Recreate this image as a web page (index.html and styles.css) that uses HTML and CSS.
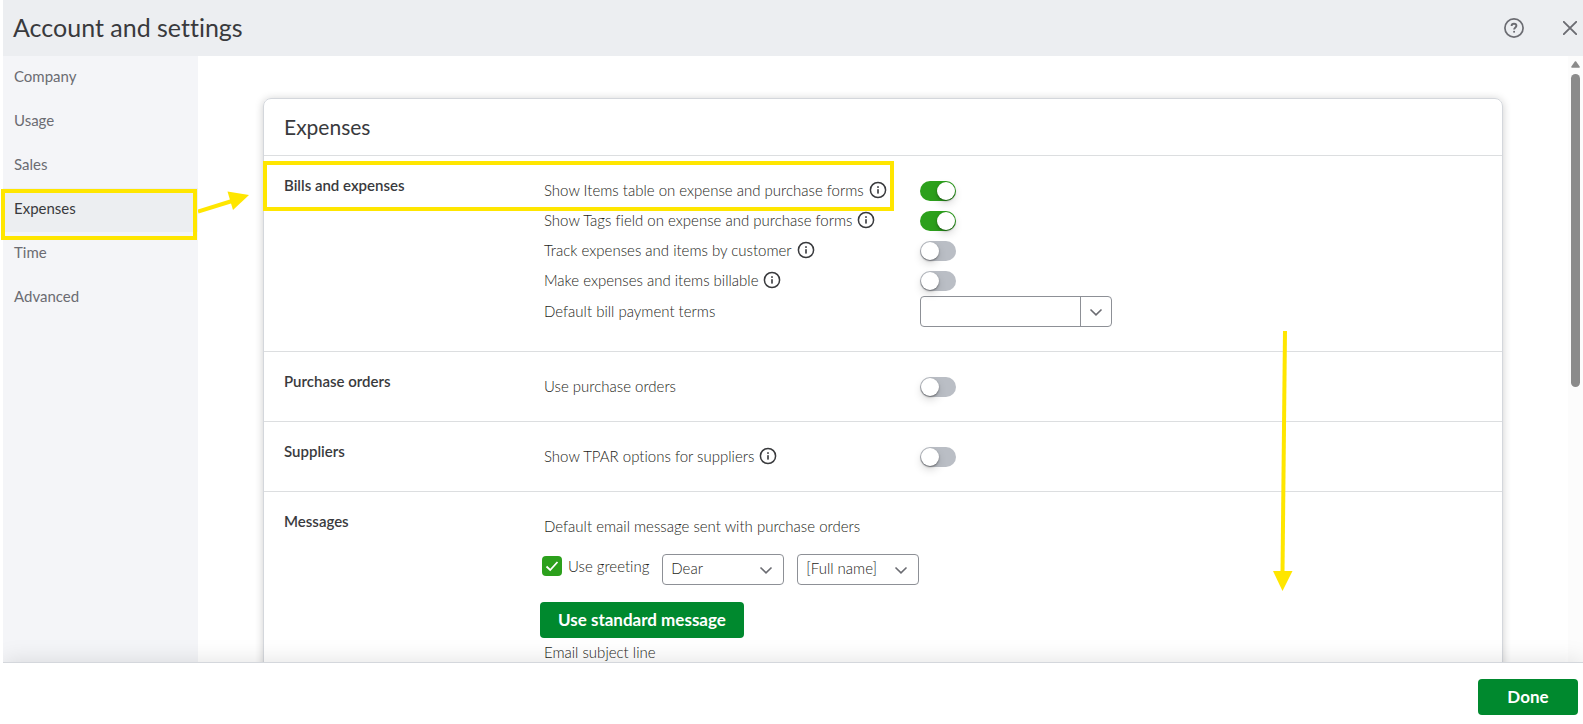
FILE: index.html
```html
<!DOCTYPE html>
<html lang="en">
    <head>
        <meta charset="utf-8">
        <title>Account and settings</title>
        <link rel="stylesheet" href="styles.css">
    </head>
    <body>
        <svg class="sprite" aria-hidden="true">
            <symbol id="icon-info" viewBox="0 0 18 18">
                <circle cx="9" cy="9" r="7.6" fill="none" stroke="currentColor" stroke-width="1.5"/>
                <rect x="8.2" y="5.2" width="1.6" height="1.7" fill="currentColor"/>
                <rect x="8.2" y="8.2" width="1.6" height="4.4" fill="currentColor"/>
            </symbol>
            <symbol id="icon-chevron" viewBox="0 0 14 14">
                <path d="M1.5 4.5 L7 9.8 L12.5 4.5" fill="none" stroke="currentColor" stroke-width="1.6"/>
            </symbol>
        </svg>

        <header class="header">
            <h1 class="title">Account and settings</h1>
            <button class="icon-button" type="button" aria-label="Help">
                <svg width="20" height="20" viewBox="0 0 20 20" fill="none" stroke="currentColor">
                    <circle cx="10" cy="10" r="9.1" stroke-width="1.7"/>
                    <path d="M7.6 7.9 C7.6 6.5 8.6 5.7 10 5.7 C11.4 5.7 12.4 6.6 12.4 7.8 C12.4 9.4 10.1 9.5 10.1 11.6" stroke-width="1.9"/>
                    <rect x="9.2" y="12.9" width="1.8" height="1.7" fill="currentColor" stroke="none"/>
                </svg>
            </button>
            <button class="icon-button" type="button" aria-label="Close">
                <svg width="14" height="14" viewBox="0 0 14 14" fill="none" stroke="currentColor" stroke-width="1.9" stroke-linecap="round">
                    <path d="M0.8 0.8 L13.2 13.2 M13.2 0.8 L0.8 13.2"/>
                </svg>
            </button>
        </header>

        <div class="body">
            <nav class="sidebar">
                <a class="nav-item" href="#">Company</a>
                <a class="nav-item" href="#">Usage</a>
                <a class="nav-item" href="#">Sales</a>
                <a class="nav-item active" href="#">
                    Expenses
                    <span class="highlight highlight-nav"></span>
                    <svg class="arrow-nav" width="54" height="24" viewBox="0 0 54 24" fill="#ffe600">
                        <path d="M0 20.5 L34 10" stroke="#ffe600" stroke-width="4"/>
                        <path d="M51 4 L29.5 0.5 L35 19 Z"/>
                    </svg>
                </a>
                <a class="nav-item" href="#">Time</a>
                <a class="nav-item" href="#">Advanced</a>
            </nav>

            <main class="content">
                <div class="card">
                    <h2 class="card-title">Expenses</h2>

                    <section class="section section-bills">
                        <span class="highlight highlight-bills"></span>
                        <h3 class="section-title">Bills and expenses</h3>
                        <div class="settings">
                            <div class="setting">
                                <div class="setting-name">
                                    <label for="items-table">Show Items table on expense and purchase forms</label>
                                    <button class="info" type="button" aria-label="More info"><svg width="18" height="18"><use href="#icon-info"/></svg></button>
                                </div>
                                <input id="items-table" class="toggle" type="checkbox" checked>
                            </div>
                            <div class="setting">
                                <div class="setting-name">
                                    <label for="tags-field">Show Tags field on expense and purchase forms</label>
                                    <button class="info" type="button" aria-label="More info"><svg width="18" height="18"><use href="#icon-info"/></svg></button>
                                </div>
                                <input id="tags-field" class="toggle" type="checkbox" checked>
                            </div>
                            <div class="setting">
                                <div class="setting-name">
                                    <label for="track-customer">Track expenses and items by customer</label>
                                    <button class="info" type="button" aria-label="More info"><svg width="18" height="18"><use href="#icon-info"/></svg></button>
                                </div>
                                <input id="track-customer" class="toggle" type="checkbox">
                            </div>
                            <div class="setting">
                                <div class="setting-name">
                                    <label for="billable">Make expenses and items billable</label>
                                    <button class="info" type="button" aria-label="More info"><svg width="18" height="18"><use href="#icon-info"/></svg></button>
                                </div>
                                <input id="billable" class="toggle" type="checkbox">
                            </div>
                            <div class="setting">
                                <div class="setting-name">
                                    <label for="terms">Default bill payment terms</label>
                                </div>
                                <div class="select select-terms">
                                    <select id="terms"><option></option></select>
                                    <span class="chevron"><svg width="14" height="14"><use href="#icon-chevron"/></svg></span>
                                </div>
                            </div>
                        </div>
                    </section>

                    <section class="section">
                        <h3 class="section-title">Purchase orders</h3>
                        <div class="settings">
                            <div class="setting">
                                <div class="setting-name">
                                    <label for="purchase-orders">Use purchase orders</label>
                                </div>
                                <input id="purchase-orders" class="toggle" type="checkbox">
                            </div>
                        </div>
                    </section>

                    <section class="section">
                        <h3 class="section-title">Suppliers</h3>
                        <div class="settings">
                            <div class="setting">
                                <div class="setting-name">
                                    <label for="tpar">Show TPAR options for suppliers</label>
                                    <button class="info" type="button" aria-label="More info"><svg width="18" height="18"><use href="#icon-info"/></svg></button>
                                </div>
                                <input id="tpar" class="toggle" type="checkbox">
                            </div>
                        </div>
                    </section>

                    <section class="section">
                        <h3 class="section-title">Messages</h3>
                        <div class="settings">
                            <p class="text">Default email message sent with purchase orders</p>
                            <div class="greeting">
                                <label class="check-label">
                                    <span class="check">
                                        <input type="checkbox" checked>
                                        <svg width="14" height="14" viewBox="0 0 14 14"><path d="M1.5 7.5 L5.2 11 L12.5 3" fill="none" stroke="#fff" stroke-width="1.8"/></svg>
                                    </span>
                                    Use greeting
                                </label>
                                <div class="select">
                                    <select aria-label="Greeting"><option>Dear</option></select>
                                    <span class="chevron"><svg width="14" height="14"><use href="#icon-chevron"/></svg></span>
                                </div>
                                <div class="select">
                                    <select aria-label="Name format"><option>[Full name]</option></select>
                                    <span class="chevron"><svg width="14" height="14"><use href="#icon-chevron"/></svg></span>
                                </div>
                            </div>
                            <button class="button button-message" type="button">Use standard message</button>
                            <p class="text">Email subject line</p>
                        </div>
                    </section>

                    <svg class="arrow-down" width="22" height="262" viewBox="0 0 22 262" fill="#ffe600">
                        <path d="M13 0 L10.5 242" stroke="#ffe600" stroke-width="4"/>
                        <path d="M1 240 L20.5 240 L10.5 260 Z"/>
                    </svg>
                </div>
            </main>

            <div class="scrollbar" aria-hidden="true">
                <svg width="9" height="7" viewBox="0 0 9 7"><path d="M4.5 1 L8 6 L1 6 Z" fill="#8b8b8b" stroke="#8b8b8b" stroke-width="1.6" stroke-linejoin="round"/></svg>
                <div class="thumb"></div>
            </div>
        </div>

        <footer class="footer">
            <button class="button button-done" type="button">Done</button>
        </footer>
    </body>
</html>
```

FILE: styles.css
```css
* {
    box-sizing: border-box;
}

body {
    margin: 0;
    padding-left: 3px;
    height: 100vh;
    overflow: hidden;
    display: flex;
    flex-direction: column;
    font-family: Lato, "Open Sans", sans-serif;
    font-size: 15px;
    line-height: 18px;
    font-variant-ligatures: none;
    color: #393a3d;
    background: #fff;
}

h1, h2, h3, p {
    margin: 0;
    font-weight: normal;
}

button, select {
    font: inherit;
    color: inherit;
}

svg {
    display: block;
}

.sprite {
    position: absolute;
    width: 0;
    height: 0;
}

/* Header */
.header {
    height: 56px;
    flex: none;
    display: flex;
    align-items: center;
    padding: 0 6px 0 10px;
    background: #eceef1;
}

.title {
    flex: 1;
    padding-bottom: 2px;
    font-size: 25px;
    line-height: 32px;
}

.icon-button {
    display: flex;
    padding: 0;
    border: 0;
    background: none;
    color: #6b6c72;
}

.icon-button + .icon-button {
    margin-left: 39px;
}

/* Layout */
.body {
    flex: 1;
    min-height: 0;
    display: flex;
}

.content {
    flex: 1;
    overflow: hidden;
    padding: 42px 65px 0;
}

/* Sidebar */
.sidebar {
    width: 195px;
    flex: none;
    background: #f4f5f8;
}

.nav-item {
    position: relative;
    display: block;
    height: 44px;
    padding: 11px;
    color: #6b6c72;
    text-decoration: none;
}

.nav-item.active {
    background: #eceef1;
    color: #393a3d;
}

/* Card */
.card {
    position: relative;
    border: 1px solid #d4d7dc;
    border-radius: 8px;
    box-shadow: 0 1px 8px rgba(0, 0, 0, 0.2);
}

.card-title {
    padding: 14px 20px;
    font-size: 21px;
    line-height: 28px;
}

.section {
    position: relative;
    display: flex;
    padding: 20px 20px 19px;
    border-top: 1px solid #dcdee0;
}

.section-bills {
    padding-bottom: 24px;
}

.section-title {
    width: 260px;
    flex: none;
    font-size: 15px;
    font-weight: 600;
}

.settings {
    flex: 1;
    font-weight: 300;
    color: #1d1e20;
}

.setting {
    display: flex;
    align-items: center;
    min-height: 30px;
}

.setting-name {
    width: 376px;
    display: flex;
    align-items: center;
    gap: 5px;
    padding-bottom: 2px;
}

.text {
    padding-bottom: 2px;
    line-height: 28px;
    font-weight: 300;
}

.info {
    display: flex;
    padding: 0;
    border: 0;
    background: none;
    color: #393a3d;
}

/* Toggle */
.toggle {
    appearance: none;
    width: 36px;
    height: 20px;
    margin: 0;
    padding: 1px;
    border-radius: 10px;
    background: #babec5;
}

.toggle::before {
    content: "";
    display: block;
    width: 18px;
    height: 18px;
    border-radius: 50%;
    background: #fff;
    box-shadow: 0 1px 2px rgba(0, 0, 0, 0.4), 0 4px 8px rgba(0, 0, 0, 0.15);
}

.toggle:checked {
    background: #2ca01c;
}

.toggle:checked::before {
    margin-left: auto;
}

/* Select */
.select {
    width: 122px;
    height: 31px;
    display: grid;
    border: 1px solid #8d9096;
    border-radius: 4px;
    overflow: hidden;
}

.select select {
    grid-area: 1 / 1;
    appearance: none;
    width: 100%;
    padding: 0 8px 3px;
    border: 0;
    background: none;
}

.select .chevron {
    grid-area: 1 / 1;
    justify-self: end;
    display: flex;
    align-items: center;
    padding: 0 10px;
    color: #6b6c72;
    pointer-events: none;
}

.select-terms {
    width: 192px;
}

.select-terms .chevron {
    padding: 0 8px;
    border-left: 1px solid #8d9096;
}

/* Greeting */
.greeting {
    display: flex;
    align-items: flex-start;
    gap: 13px;
    margin: 12px 0 17px -2px;
}

.check-label {
    display: flex;
    align-items: center;
    gap: 6px;
    height: 24px;
}

.check {
    display: grid;
    place-items: center;
}

.check input {
    grid-area: 1 / 1;
    appearance: none;
    width: 20px;
    height: 20px;
    margin: 0;
    border-radius: 4px;
    background: #2ca01c;
}

.check svg {
    grid-area: 1 / 1;
    z-index: 1;
}

/* Buttons */
.button {
    display: block;
    height: 36px;
    padding: 0 18px;
    border: 0;
    border-radius: 4px;
    background: #00892e;
    color: #fff;
    font-size: 17px;
    font-weight: bold;
}

.button-message {
    margin-left: -4px;
}

.button-done {
    width: 100px;
}

/* Scrollbar */
.scrollbar {
    width: 15px;
    flex: none;
    display: flex;
    flex-direction: column;
    align-items: center;
    gap: 6px;
    padding-top: 5px;
    background: #fcfcfc;
}

.thumb {
    width: 9px;
    height: 52%;
    border-radius: 5px;
    background: #8b8b8b;
}

/* Footer */
.footer {
    position: relative;
    flex: none;
    display: flex;
    justify-content: flex-end;
    padding: 16px 5px 9px;
    border-top: 1px solid #d4d7dc;
    background: #fff;
    box-shadow: 0 0 24px rgba(0, 0, 0, 0.13);
    clip-path: inset(-30px 0 0 0);
}

/* Highlights and arrows over the page */
.highlight {
    position: absolute;
    border: 4px solid #ffe600;
    pointer-events: none;
}

.highlight-nav {
    inset: 1px 1px -8px -2px;
}

.arrow-nav {
    position: absolute;
    left: 100%;
    top: 3px;
}

.highlight-bills {
    left: -1px;
    top: 5px;
    width: 631px;
    height: 50px;
}

.arrow-down {
    position: absolute;
    right: 208px;
    top: 232px;
}
```
